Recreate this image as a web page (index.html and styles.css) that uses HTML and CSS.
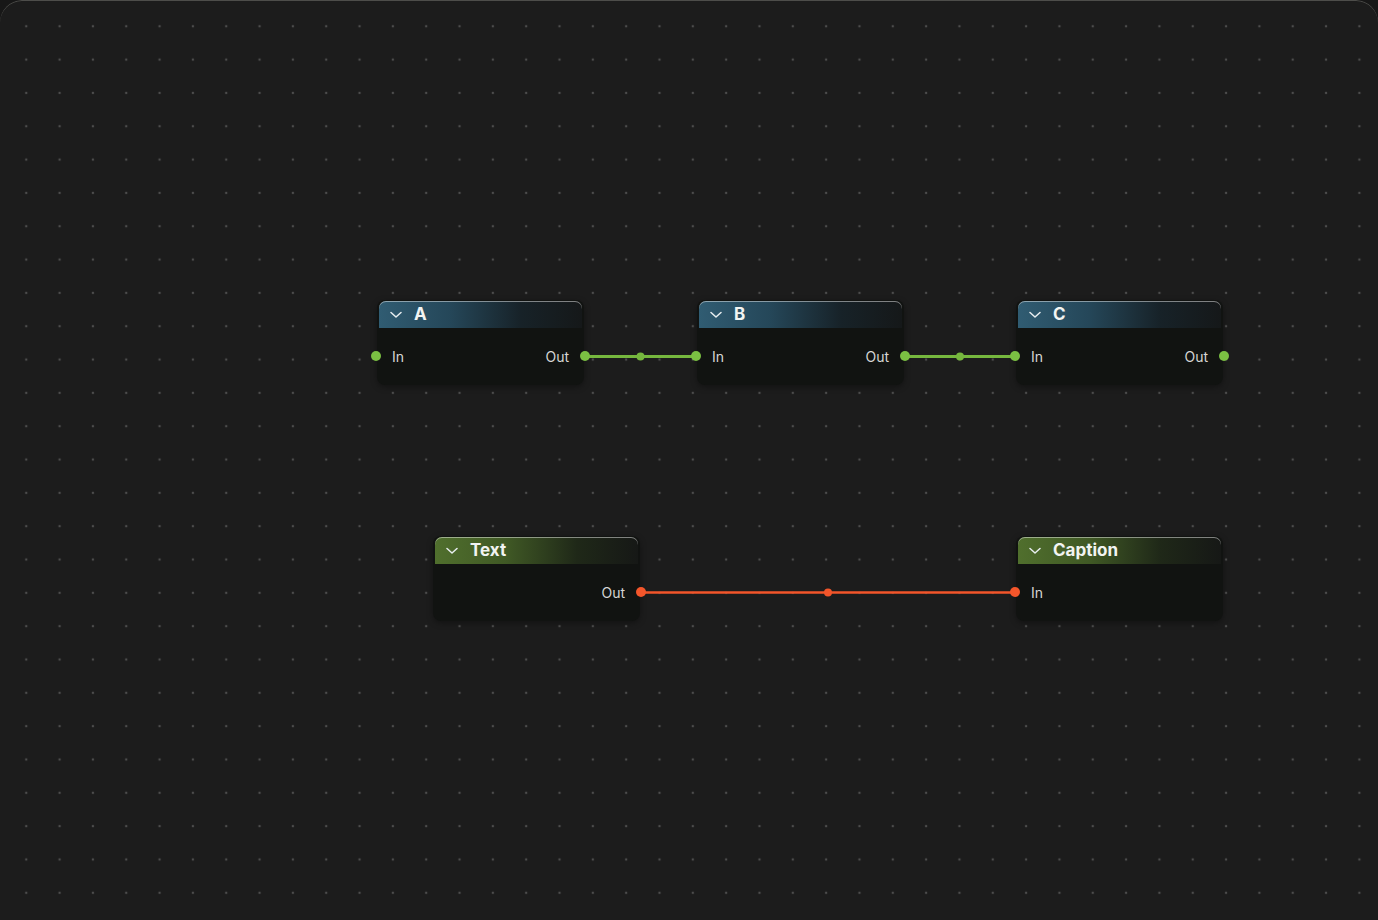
FILE: index.html
```html
<!DOCTYPE html>
<html lang="en">
<head>
  <meta charset="UTF-8">
  <title>Node Graph</title>
  <link rel="stylesheet" href="styles.css">
</head>
<body>
<div class="canvas">

  <!-- wires sit under the nodes -->
  <svg class="wires" width="1378" height="920" viewBox="0 0 1378 920">
    <g class="wire-green">
      <line x1="585" y1="356.5" x2="696" y2="356.5" />
      <circle cx="640.5" cy="356.5" r="4" />
      <line x1="904" y1="356.5" x2="1016" y2="356.5" />
      <circle cx="960" cy="356.5" r="4" />
    </g>
    <g class="wire-red">
      <line x1="640" y1="592.5" x2="1016" y2="592.5" />
      <circle cx="828" cy="592.5" r="4" />
    </g>
  </svg>

  <div class="node node-a">
    <div class="node-head blue">
      <svg class="chev" width="12" height="8" viewBox="0 0 12 8"><path d="M1 1.5 L6 6 L11 1.5" /></svg>
      <span class="title">A</span>
    </div>
    <div class="node-row">
      <span class="sock in green"></span><span class="lbl">In</span>
      <span class="lbl">Out</span><span class="sock out green"></span>
    </div>
  </div>

  <div class="node node-b">
    <div class="node-head blue">
      <svg class="chev" width="12" height="8" viewBox="0 0 12 8"><path d="M1 1.5 L6 6 L11 1.5" /></svg>
      <span class="title">B</span>
    </div>
    <div class="node-row">
      <span class="sock in green"></span><span class="lbl">In</span>
      <span class="lbl">Out</span><span class="sock out green"></span>
    </div>
  </div>

  <div class="node node-c">
    <div class="node-head blue">
      <svg class="chev" width="12" height="8" viewBox="0 0 12 8"><path d="M1 1.5 L6 6 L11 1.5" /></svg>
      <span class="title">C</span>
    </div>
    <div class="node-row">
      <span class="sock in green"></span><span class="lbl">In</span>
      <span class="lbl">Out</span><span class="sock out green"></span>
    </div>
  </div>

  <div class="node node-text">
    <div class="node-head olive">
      <svg class="chev" width="12" height="8" viewBox="0 0 12 8"><path d="M1 1.5 L6 6 L11 1.5" /></svg>
      <span class="title">Text</span>
    </div>
    <div class="node-row end">
      <span class="lbl">Out</span><span class="sock out red"></span>
    </div>
  </div>

  <div class="node node-caption">
    <div class="node-head olive">
      <svg class="chev" width="12" height="8" viewBox="0 0 12 8"><path d="M1 1.5 L6 6 L11 1.5" /></svg>
      <span class="title">Caption</span>
    </div>
    <div class="node-row">
      <span class="sock in red"></span><span class="lbl">In</span>
    </div>
  </div>

</div>
</body>
</html>
```

FILE: styles.css
```css
html, body {
  margin: 0;
  padding: 0;
  width: 100vw;
  height: 100vh;
  overflow: hidden;
  background: #171717;
  font-family: Inter, "Noto Sans", sans-serif;
}
.canvas {
  position: relative;
  width: 1378px;
  height: 960px;
  border-radius: 22px 22px 0 0;
  background-color: #1c1c1c;
  background-image: radial-gradient(circle, #4d4d4d 1.1px, transparent 1.6px);
  background-size: 33.333px 33.333px;
  background-position: 9.6px 9.6px;
  box-shadow: inset 0 1px 0 rgba(255, 255, 240, 0.22);
  overflow: hidden;
}
.wires {
  position: absolute;
  left: 0;
  top: 0;
}
.wire-green line {
  stroke: #76b73e;
  stroke-width: 3;
}
.wire-green circle {
  fill: #76b73e;
}
.wire-red line {
  stroke: #f2552a;
  stroke-width: 2.4;
}
.wire-red circle {
  fill: #f2552a;
}
.node {
  position: absolute;
  width: 207px;
  height: 85px;
  box-sizing: border-box;
  padding: 1px 2px 0;
  background: #111311;
  border-radius: 8px;
  box-shadow: 0 2px 6px rgba(0, 0, 0, 0.35);
}
.node-a { left: 377px; top: 300px; }
.node-b { left: 697px; top: 300px; }
.node-c { left: 1016px; top: 300px; }
.node-text { left: 433px; top: 536px; }
.node-caption { left: 1016px; top: 536px; }

.node-head {
  height: 27px;
  display: flex;
  align-items: center;
  gap: 12px;
  padding-left: 11px;
  border-radius: 7px 7px 0 0;
  box-shadow: inset 0 1px 0 rgba(255, 255, 255, 0.45);
}
.node-head.blue {
  background: linear-gradient(90deg, #305c72 0%, #254759 35%, #172228 70%, #151819 100%);
}
.node-head.olive {
  background: linear-gradient(90deg, #506f2d 0%, #405925 35%, #1f2818 70%, #161816 100%);
}
.chev {
  fill: none;
  stroke: #e8eef0;
  stroke-width: 1.5;
  stroke-linecap: round;
  stroke-linejoin: round;
}
.title {
  color: #f2f4f2;
  font-size: 17px;
  font-weight: 700;
  line-height: 1;
  margin-top: -1px;
}
.node-row {
  position: relative;
  height: 56px;
  display: flex;
  align-items: center;
  justify-content: space-between;
  padding: 2px 13px 0;
  box-sizing: border-box;
}
.node-row.end {
  justify-content: flex-end;
}
.lbl {
  color: #d6d6d4;
  font-size: 14px;
  line-height: 1;
}
.sock {
  position: absolute;
  top: 23px;
  width: 10px;
  height: 10px;
  border-radius: 50%;
}
.sock.in { left: -8px; }
.sock.out { right: -8px; }
.sock.green { background: #7bc043; }
.sock.red { background: #f4562b; }
```
